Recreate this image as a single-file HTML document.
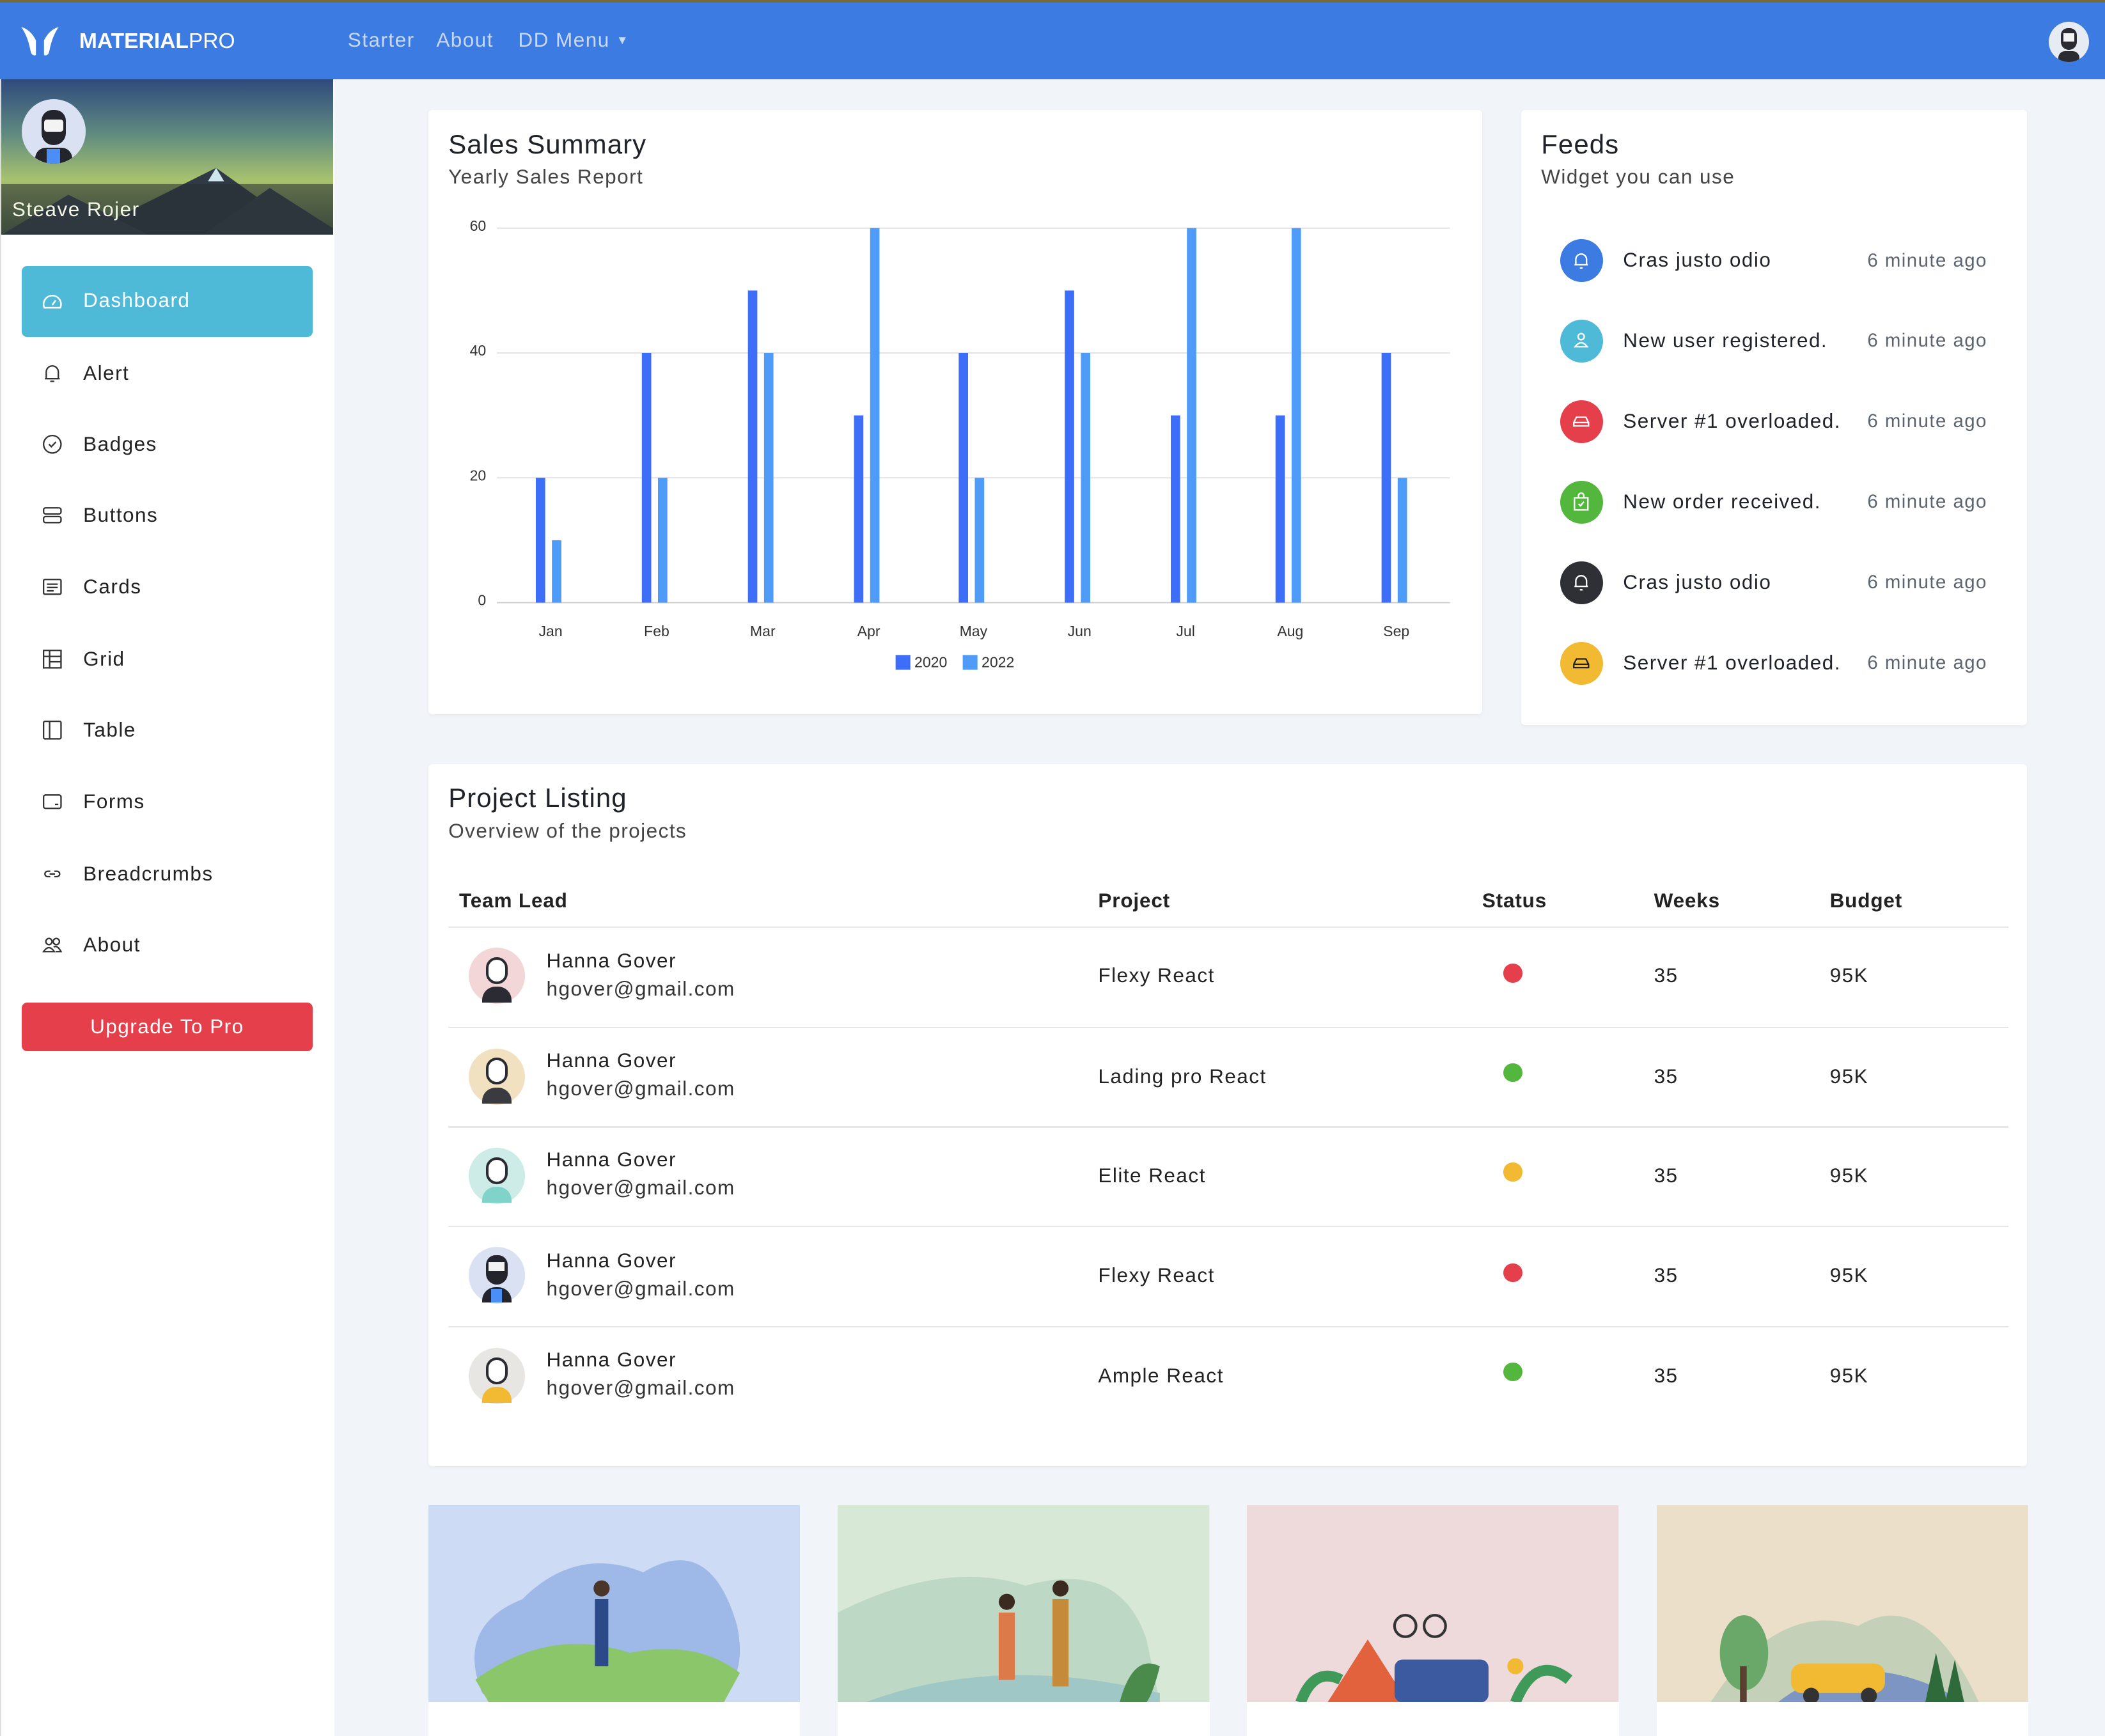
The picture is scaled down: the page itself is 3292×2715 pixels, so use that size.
<!DOCTYPE html>
<html><head><meta charset="utf-8">
<style>
html,body{margin:0;padding:0;}
body{width:3292px;height:2714px;overflow:hidden;background:#f1f4f8;font-family:"Liberation Sans",sans-serif;}
#w{position:relative;width:1568px;height:1293px;zoom:2.0995;background:#f1f4f8;overflow:hidden;color:#1f2329;letter-spacing:.7px;}
#w svg{letter-spacing:0;}
.a{position:absolute;}
.card{position:absolute;background:#fff;border-radius:3px;box-shadow:0 1px 3px rgba(0,0,0,.04);}
.mi{position:absolute;left:62px;font-size:15px;color:#222;}
.ic{position:absolute;left:31px;width:16px;height:16px;}
.fc{position:absolute;left:1162px;width:32px;height:32px;border-radius:50%;}
.ft{position:absolute;left:1209px;font-size:15px;color:#1f2329;}
.fm{position:absolute;left:1391px;font-size:14px;color:#5c6470;}
.th{position:absolute;top:662px;font-size:15px;font-weight:bold;color:#222;letter-spacing:.4px;}
.td{position:absolute;font-size:15px;color:#222;}
.hr{position:absolute;left:334px;width:1162px;height:1px;background:#e4e7eb;}
.av{position:absolute;left:349px;width:42px;height:42px;border-radius:50%;}
.dot{position:absolute;left:1120px;width:14px;height:14px;border-radius:50%;}
.h2{position:absolute;font-size:20px;color:#1f2329;letter-spacing:.5px;}
</style></head><body><div id="w">
<div class="a" style="left:0;top:0;width:1568px;height:2px;background:#7a6a3a"></div>
<div class="a" style="left:0;top:2px;width:1568px;height:57px;background:#3b7be2"></div>
<svg class="a" style="left:15px;top:19px" width="30" height="25" viewBox="0 0 30 25"><path d="M1 1 Q8 3 12 11 L12 22 Q9 23 8 19 Q6 8 1 1Z M29 1 Q22 3 18 11 L18 22 Q21 23 22 19 Q24 8 29 1Z" fill="#fff"/></svg>
<div class="a" style="left:59px;top:22px;font-size:16px;color:#fff;font-weight:bold;letter-spacing:0">MATERIAL<span style="font-weight:normal">PRO</span></div>
<div class="a" style="left:259px;top:21px;font-size:15px;color:#c9d8f6">Starter</div>
<div class="a" style="left:325px;top:21px;font-size:15px;color:#c9d8f6">About</div>
<div class="a" style="left:386px;top:21px;font-size:15px;color:#c9d8f6">DD Menu <span style="font-size:9px;vertical-align:2px">▼</span></div>
<div class="a" style="left:1526px;top:16px;width:30px;height:30px;border-radius:50%;background:#e6ebf4;overflow:hidden"><div class="a" style="left:9px;top:5px;width:12px;height:16px;border-radius:6px 6px 7px 7px;background:#2a2b33"></div><div class="a" style="left:11px;top:9px;width:8px;height:6px;background:#f3f3f3"></div><div class="a" style="left:7px;top:22px;width:16px;height:9px;border-radius:5px 5px 0 0;background:#2a2b33"></div></div>
<!-- sidebar -->
<div class="a" style="left:0;top:59px;width:248px;height:1234px;background:#fff;border-left:1px solid #ddd"></div>
<div class="a" style="left:1px;top:59px;width:247px;height:116px;background:linear-gradient(180deg,#2f4a7c 0%,#5f8a80 35%,#a9c26e 65%,#516b48 100%)"></div>
<svg class="a" style="left:1px;top:100px" width="247" height="75"><polygon points="60,75 160,25 230,75" fill="#2f3a45"/><polygon points="0,75 50,45 110,75" fill="#3a4550"/><polygon points="150,75 200,40 247,70 247,75" fill="#36414d"/><polygon points="154,35 160,25 166,35" fill="#cfe6ef"/></svg>
<div class="a" style="left:1px;top:137px;width:247px;height:38px;background:rgba(40,45,50,.55)"></div>
<div class="a" style="left:9px;top:147px;font-size:15px;color:#f3f5e6">Steave Rojer</div>
<div class="a" style="left:16px;top:74px;width:48px;height:48px;border-radius:50%;background:#d9e1f3;overflow:hidden"><div class="a" style="left:15px;top:8px;width:18px;height:26px;border-radius:8px 8px 9px 9px;background:#24252c"></div><div class="a" style="left:17px;top:15px;width:14px;height:9px;background:#f3f3f3;border-radius:2px"></div><div class="a" style="left:10px;top:36px;width:28px;height:14px;border-radius:8px 8px 0 0;background:#24252c"></div><div class="a" style="left:19px;top:37px;width:10px;height:12px;background:#4c8ef7"></div></div>
<div class="a" style="left:16px;top:198px;width:217px;height:53px;background:#4fb9d8;border-radius:4px"></div>
<svg class="a" style="left:31px;top:217px" width="16" height="16" viewBox="0 0 16 16" fill="none" stroke="#fff" stroke-width="1.2"><path d="M2 12 A6.5 6.5 0 1 1 14 12 Z"/><path d="M8 10 L10.5 6.5"/></svg>
<div class="a" style="left:62px;top:215px;font-size:15px;color:#fff">Dashboard</div>
<svg class="ic" style="top:270px" viewBox="0 0 16 16" fill="none" stroke="#333" stroke-width="1.1"><path d="M3.5 12 V7 A4.5 4.5 0 0 1 12.5 7 V12 H2.5 H13.5 M6.5 14 H9.5"/></svg>
<div class="mi" style="top:269px">Alert</div>
<svg class="ic" style="top:323px" viewBox="0 0 16 16" fill="none" stroke="#333" stroke-width="1.1"><circle cx="8" cy="8" r="6.5"/><path d="M5.5 8 L7.3 9.8 L10.7 6.3"/></svg>
<div class="mi" style="top:322px">Badges</div>
<svg class="ic" style="top:376px" viewBox="0 0 16 16" fill="none" stroke="#333" stroke-width="1.1"><rect x="1.5" y="2.5" width="13" height="4.5" rx="1.5"/><rect x="1.5" y="9" width="13" height="4.5" rx="1.5"/></svg>
<div class="mi" style="top:375px">Buttons</div>
<svg class="ic" style="top:429px" viewBox="0 0 16 16" fill="none" stroke="#333" stroke-width="1.1"><rect x="1.5" y="2.5" width="13" height="11" rx="1"/><path d="M4 6 H12 M4 8.5 H12 M4 11 H9"/></svg>
<div class="mi" style="top:428px">Cards</div>
<svg class="ic" style="top:483px" viewBox="0 0 16 16" fill="none" stroke="#333" stroke-width="1.1"><rect x="1.5" y="1.5" width="13" height="13"/><path d="M1.5 6 H14.5 M6 1.5 V14.5 M6 10 H14.5"/></svg>
<div class="mi" style="top:482px">Grid</div>
<svg class="ic" style="top:536px" viewBox="0 0 16 16" fill="none" stroke="#333" stroke-width="1.1"><rect x="1.5" y="1.5" width="13" height="13" rx="1"/><path d="M6 1.5 V14.5"/></svg>
<div class="mi" style="top:535px">Table</div>
<svg class="ic" style="top:589px" viewBox="0 0 16 16" fill="none" stroke="#333" stroke-width="1.1"><rect x="1.5" y="3" width="13" height="10" rx="1.5"/><path d="M10 10 H12.5"/></svg>
<div class="mi" style="top:588px">Forms</div>
<svg class="ic" style="top:643px" viewBox="0 0 16 16" fill="none" stroke="#333" stroke-width="1.1"><path d="M6.5 6 H4.5 A2 2 0 0 0 4.5 10 H6.5 M9.5 6 H11.5 A2 2 0 0 1 11.5 10 H9.5 M6 8 H10"/></svg>
<div class="mi" style="top:642px">Breadcrumbs</div>
<svg class="ic" style="top:696px" viewBox="0 0 16 16" fill="none" stroke="#333" stroke-width="1.1"><circle cx="5.5" cy="5.5" r="2.3"/><circle cx="11" cy="5.5" r="2.3"/><path d="M1.5 13 Q5.5 7 9.5 13 Z M9 9.5 Q12 8 14.5 13 H10.5"/></svg>
<div class="mi" style="top:695px">About</div>
<div class="a" style="left:16px;top:747px;width:217px;height:36px;background:#e63f4c;border-radius:4px;color:#fff;font-size:15px;text-align:center;line-height:36px">Upgrade To Pro</div>
<!-- sales -->
<div class="card" style="left:319px;top:82px;width:785px;height:450px"></div>
<div class="h2" style="left:334px;top:96px">Sales Summary</div>
<div class="a" style="left:334px;top:123px;font-size:15px;color:#444">Yearly Sales Report</div>
<svg class="a" style="left:319px;top:82px" width="785" height="450" viewBox="319 82 785 450" font-family="Liberation Sans,sans-serif" font-size="11" fill="#333">
<g stroke="#e3e3e3" stroke-width="1"><line x1="370" y1="170" x2="1080" y2="170"/><line x1="370" y1="263" x2="1080" y2="263"/><line x1="370" y1="356" x2="1080" y2="356"/><line x1="370" y1="449" x2="1080" y2="449" stroke="#ccc"/></g>
<text x="362" y="172" text-anchor="end">60</text><text x="362" y="265" text-anchor="end">40</text><text x="362" y="358" text-anchor="end">20</text><text x="362" y="451" text-anchor="end">0</text>
<g fill="#3d6ef7">
<rect x="399" y="356" width="7" height="93"/><rect x="478" y="263" width="7" height="186"/><rect x="557" y="216.5" width="7" height="232.5"/><rect x="636" y="309.5" width="7" height="139.5"/><rect x="714" y="263" width="7" height="186"/><rect x="793" y="216.5" width="7" height="232.5"/><rect x="872" y="309.5" width="7" height="139.5"/><rect x="950" y="309.5" width="7" height="139.5"/><rect x="1029" y="263" width="7" height="186"/></g>
<g fill="#4e9cf8">
<rect x="411" y="402.5" width="7" height="46.5"/><rect x="490" y="356" width="7" height="93"/><rect x="569" y="263" width="7" height="186"/><rect x="648" y="170" width="7" height="279"/><rect x="726" y="356" width="7" height="93"/><rect x="805" y="263" width="7" height="186"/><rect x="884" y="170" width="7" height="279"/><rect x="962" y="170" width="7" height="279"/><rect x="1041" y="356" width="7" height="93"/></g>
<g text-anchor="middle"><text x="410" y="474">Jan</text><text x="489" y="474">Feb</text><text x="568" y="474">Mar</text><text x="647" y="474">Apr</text><text x="725" y="474">May</text><text x="804" y="474">Jun</text><text x="883" y="474">Jul</text><text x="961" y="474">Aug</text><text x="1040" y="474">Sep</text></g>
<rect x="667" y="488" width="11" height="11" fill="#3d6ef7"/><text x="681" y="497">2020</text>
<rect x="717" y="488" width="11" height="11" fill="#4e9cf8"/><text x="731" y="497">2022</text>
</svg>
<!-- feeds -->
<div class="card" style="left:1133px;top:82px;width:377px;height:458px"></div>
<div class="h2" style="left:1148px;top:96px">Feeds</div>
<div class="a" style="left:1148px;top:123px;font-size:15px;color:#444">Widget you can use</div>
<div class="fc" style="top:178px;background:#3b7be2"></div><div class="ft" style="top:185px">Cras justo odio</div><div class="fm" style="top:186px">6 minute ago</div>
<div class="fc" style="top:238px;background:#4fb9d8"></div><div class="ft" style="top:245px">New user registered.</div><div class="fm" style="top:246px">6 minute ago</div>
<div class="fc" style="top:298px;background:#e63f4c"></div><div class="ft" style="top:305px">Server #1 overloaded.</div><div class="fm" style="top:306px">6 minute ago</div>
<div class="fc" style="top:358px;background:#52b73c"></div><div class="ft" style="top:365px">New order received.</div><div class="fm" style="top:366px">6 minute ago</div>
<div class="fc" style="top:418px;background:#2e3036"></div><div class="ft" style="top:425px">Cras justo odio</div><div class="fm" style="top:426px">6 minute ago</div>
<div class="fc" style="top:478px;background:#f2b933"></div><div class="ft" style="top:485px">Server #1 overloaded.</div><div class="fm" style="top:486px">6 minute ago</div>
<svg class="a" style="left:1170px;top:186px" width="16" height="16" viewBox="0 0 16 16" fill="none" stroke="#fff" stroke-width="1.1"><path d="M4 11 V7 A4 4 0 0 1 12 7 V11 H3 H13 M7 13.5 H9"/></svg>
<svg class="a" style="left:1170px;top:246px" width="16" height="16" viewBox="0 0 16 16" fill="none" stroke="#fff" stroke-width="1.1"><circle cx="8" cy="5" r="2.3"/><path d="M3.5 12.5 Q8 6.5 12.5 12.5 Z"/></svg>
<svg class="a" style="left:1170px;top:306px" width="16" height="16" viewBox="0 0 16 16" fill="none" stroke="#fff" stroke-width="1.1"><path d="M2.5 9 L4.5 5 H11.5 L13.5 9 V11.5 H2.5 Z M2.5 9 H13.5"/></svg>
<svg class="a" style="left:1170px;top:366px" width="16" height="16" viewBox="0 0 16 16" fill="none" stroke="#fff" stroke-width="1.1"><rect x="3" y="5" width="10" height="9"/><path d="M6 5 V3.5 A2 2 0 0 1 10 3.5 V5 M6 9.5 L7.5 11 L10 8"/></svg>
<svg class="a" style="left:1170px;top:426px" width="16" height="16" viewBox="0 0 16 16" fill="none" stroke="#fff" stroke-width="1.1"><path d="M4 11 V7 A4 4 0 0 1 12 7 V11 H3 H13 M7 13.5 H9"/></svg>
<svg class="a" style="left:1170px;top:486px" width="16" height="16" viewBox="0 0 16 16" fill="none" stroke="#222" stroke-width="1.1"><path d="M2.5 9 L4.5 5 H11.5 L13.5 9 V11.5 H2.5 Z M2.5 9 H13.5"/></svg>
<!-- projects -->
<div class="card" style="left:319px;top:569px;width:1191px;height:523px"></div>
<div class="h2" style="left:334px;top:583px">Project Listing</div>
<div class="a" style="left:334px;top:610px;font-size:15px;color:#444">Overview of the projects</div>
<div class="th" style="left:342px">Team Lead</div><div class="th" style="left:818px">Project</div><div class="th" style="left:1104px">Status</div><div class="th" style="left:1232px">Weeks</div><div class="th" style="left:1363px">Budget</div>
<div class="hr" style="top:690px"></div>
<div class="hr" style="top:765px"></div>
<div class="hr" style="top:839px"></div>
<div class="hr" style="top:913px"></div>
<div class="hr" style="top:988px"></div>

<div class="av" style="top:706px;background:#f3d6d8"></div>
<div class="td" style="left:407px;top:707px">Hanna Gover</div><div class="td" style="left:407px;top:728px;color:#333">hgover@gmail.com</div>
<div class="td" style="left:818px;top:718px">Flexy React</div><div class="dot" style="top:718px;background:#e63f4c"></div>
<div class="td" style="left:1232px;top:718px">35</div><div class="td" style="left:1363px;top:718px">95K</div>

<div class="av" style="top:781px;background:#f1e1c0"></div>
<div class="td" style="left:407px;top:781px">Hanna Gover</div><div class="td" style="left:407px;top:802px;color:#333">hgover@gmail.com</div>
<div class="td" style="left:818px;top:793px">Lading pro React</div><div class="dot" style="top:792px;background:#52b73c"></div>
<div class="td" style="left:1232px;top:793px">35</div><div class="td" style="left:1363px;top:793px">95K</div>

<div class="av" style="top:855px;background:#cdece8"></div>
<div class="td" style="left:407px;top:855px">Hanna Gover</div><div class="td" style="left:407px;top:876px;color:#333">hgover@gmail.com</div>
<div class="td" style="left:818px;top:867px">Elite React</div><div class="dot" style="top:866px;background:#f2b933"></div>
<div class="td" style="left:1232px;top:867px">35</div><div class="td" style="left:1363px;top:867px">95K</div>

<div class="av" style="top:929px;background:#d9e1f3"></div>
<div class="td" style="left:407px;top:930px">Hanna Gover</div><div class="td" style="left:407px;top:951px;color:#333">hgover@gmail.com</div>
<div class="td" style="left:818px;top:941px">Flexy React</div><div class="dot" style="top:941px;background:#e63f4c"></div>
<div class="td" style="left:1232px;top:941px">35</div><div class="td" style="left:1363px;top:941px">95K</div>

<div class="av" style="top:1004px;background:#e8e6e2"></div>
<div class="td" style="left:407px;top:1004px">Hanna Gover</div><div class="td" style="left:407px;top:1025px;color:#333">hgover@gmail.com</div>
<div class="td" style="left:818px;top:1016px">Ample React</div><div class="dot" style="top:1015px;background:#52b73c"></div>
<div class="td" style="left:1232px;top:1016px">35</div><div class="td" style="left:1363px;top:1016px">95K</div>
<!-- avatar faces -->
<div class="a" style="left:362px;top:713px;width:16px;height:20px;border-radius:8px;background:#fff;border:2px solid #2a2b33;box-sizing:border-box"></div><div class="a" style="left:359px;top:735px;width:22px;height:12px;border-radius:10px 10px 0 0;background:#2a2b33"></div>
<div class="a" style="left:362px;top:788px;width:16px;height:20px;border-radius:8px;background:#fff;border:2px solid #2a2b33;box-sizing:border-box"></div><div class="a" style="left:359px;top:810px;width:22px;height:12px;border-radius:10px 10px 0 0;background:#3a3b40"></div>
<div class="a" style="left:362px;top:862px;width:16px;height:20px;border-radius:8px;background:#fff;border:2px solid #2a2b33;box-sizing:border-box"></div><div class="a" style="left:359px;top:884px;width:22px;height:12px;border-radius:10px 10px 0 0;background:#7fd3c9"></div>
<div class="a" style="left:362px;top:935px;width:16px;height:22px;border-radius:8px 8px 9px 9px;background:#24252c"></div><div class="a" style="left:364px;top:940px;width:12px;height:7px;background:#f3f3f3"></div><div class="a" style="left:359px;top:959px;width:22px;height:11px;border-radius:10px 10px 0 0;background:#24252c"></div><div class="a" style="left:366px;top:960px;width:8px;height:10px;background:#4c8ef7"></div>
<div class="a" style="left:362px;top:1011px;width:16px;height:20px;border-radius:8px;background:#fff;border:2px solid #2a2b33;box-sizing:border-box"></div><div class="a" style="left:359px;top:1033px;width:22px;height:12px;border-radius:10px 10px 0 0;background:#f2b933"></div>
<!-- image cards -->
<div class="a" style="left:319px;top:1121px;width:277px;height:172px;background:#fff"></div>
<div class="a" style="left:624px;top:1121px;width:277px;height:172px;background:#fff"></div>
<div class="a" style="left:929px;top:1121px;width:277px;height:172px;background:#fff"></div>
<div class="a" style="left:1234px;top:1121px;width:277px;height:172px;background:#fff"></div>
<svg class="a" style="left:319px;top:1121px" width="277" height="147"><rect width="277" height="147" fill="#cddcf4"/><path d="M40 140 Q20 90 70 70 Q110 30 160 50 Q210 20 230 90 Q240 140 200 147 L50 147Z" fill="#9eb8e8"/><path d="M35 130 Q90 90 150 110 Q200 100 232 125 L220 147 L45 147Z" fill="#8cc66a"/><rect x="124" y="70" width="10" height="50" fill="#2c4a8a"/><circle cx="129" cy="62" r="6" fill="#4a3528"/></svg>
<svg class="a" style="left:624px;top:1121px" width="277" height="147"><rect width="277" height="147" fill="#d7e8d6"/><path d="M0 80 Q80 40 140 60 Q210 40 230 100 L240 147 L0 147Z" fill="#bdd8c4"/><path d="M20 147 Q120 110 240 140 L240 147Z" fill="#9fc7c6"/><rect x="120" y="80" width="12" height="50" fill="#dd7a4a"/><rect x="160" y="70" width="12" height="65" fill="#c58b3a"/><circle cx="126" cy="72" r="6" fill="#3a2a20"/><circle cx="166" cy="62" r="6" fill="#3a2a20"/><path d="M210 147 Q220 110 240 120 Q235 140 230 147Z" fill="#4a8a4a"/></svg>
<svg class="a" style="left:929px;top:1121px" width="277" height="147"><rect width="277" height="147" fill="#eed9db"/><polygon points="60,147 90,100 120,147" fill="#e2623e"/><rect x="110" y="115" width="70" height="32" rx="6" fill="#3b5aa0"/><circle cx="118" cy="90" r="8" fill="none" stroke="#333" stroke-width="2"/><circle cx="140" cy="90" r="8" fill="none" stroke="#333" stroke-width="2"/><path d="M40 147 Q50 120 70 130 M200 147 Q215 110 240 130" stroke="#3f9a5a" stroke-width="8" fill="none"/><circle cx="200" cy="120" r="6" fill="#f2b933"/></svg>
<svg class="a" style="left:1234px;top:1121px" width="277" height="147"><rect width="277" height="147" fill="#ebdfc9"/><path d="M40 147 Q90 70 150 90 Q200 60 240 147Z" fill="#c4d1b8"/><path d="M90 147 Q150 100 230 147Z" fill="#7d95c2"/><rect x="100" y="118" width="70" height="22" rx="8" fill="#f2b933"/><circle cx="115" cy="142" r="6" fill="#333"/><circle cx="158" cy="142" r="6" fill="#333"/><ellipse cx="65" cy="110" rx="18" ry="28" fill="#6aa86a"/><rect x="62" y="120" width="5" height="27" fill="#5a4030"/><polygon points="200,147 208,110 216,147" fill="#2f6a3a"/><polygon points="215,147 222,115 229,147" fill="#2f6a3a"/></svg>
</div></body></html>
